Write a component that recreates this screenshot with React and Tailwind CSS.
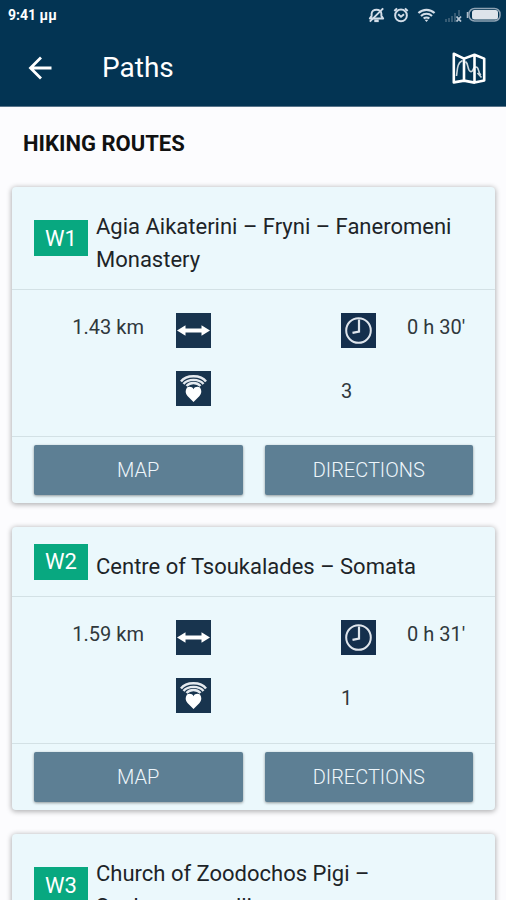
const routes = [
  {
    code: "W1",
    name: "Agia Aikaterini – Fryni – Faneromeni Monastery",
    distance: "1.43 km",
    time: "0 h 30'",
    difficulty: 3,
  },
  {
    code: "W2",
    name: "Centre of Tsoukalades – Somata",
    distance: "1.59 km",
    time: "0 h 31'",
    difficulty: 1,
  },
  {
    code: "W3",
    name: "Church of Zoodochos Pigi – Spakomenocelli",
    distance: "2.10 km",
    time: "0 h 45'",
    difficulty: 2,
  },
];

const StatusIcons = () => (
  <div className="flex items-center text-[#d3dde8]">
    {/* muted bell */}
    <svg viewBox="0 0 18 18" className="mr-2 h-4 w-[17px]" fill="none" stroke="currentColor" strokeWidth="2.200">
      <path d="M1.500 13h15l-2-3V7.600C14.500 4.800 12 3 9 3S3.500 4.800 3.500 7.600V10z" strokeLinejoin="round" />
      <path d="M6.500 15.500h5" strokeWidth="3" />
      <path d="M1.500 16.500l15-15" />
    </svg>
    {/* alarm */}
    <svg viewBox="0 0 18 18" className="mr-2 size-4" fill="none" stroke="currentColor" strokeWidth="2.200">
      <circle cx="9" cy="9.500" r="6.600" />
      <path d="M5.800 8.200L9 11l3.400-2.800M1.500 4.500l3-3M16.500 4.500l-3-3" />
    </svg>
    {/* wifi */}
    <svg viewBox="0 0 20 16" className="mr-2 h-4 w-[19px]" fill="none" stroke="currentColor" strokeWidth="2.200">
      <path d="M1.500 6a12.300 12.300 0 0 1 17 0M4.200 9a8.400 8.400 0 0 1 11.600 0M7 11.800a4.400 4.400 0 0 1 6 0" />
      <path d="M8 13h4l-2 2.400z" fill="currentColor" stroke="none" />
    </svg>
    {/* no signal */}
    <svg viewBox="0 0 18 14" className="mr-1 h-[14px] w-[18px]" fill="none" strokeWidth="2">
      <path d="M2 14v-3M5 14v-4M8 14V8M11 14V5M15 8V2" stroke="#365b74" />
      <path d="M12.500 8.500l4.500 5M17 8.500l-4.500 5" stroke="#b9c8d6" strokeWidth="1.800" />
    </svg>
    {/* battery */}
    <svg viewBox="0 0 36 16" className="h-4 w-9" fill="none">
      <rect x="3" y="1.500" width="31" height="12.500" rx="5.500" stroke="#8fa3b4" strokeWidth="1.500" />
      <rect x="6" y="3" width="26" height="9.500" rx="2.500" fill="#dde3ea" />
      <path d="M1.500 5v6" stroke="#aebdca" strokeWidth="1.500" />
    </svg>
  </div>
);

const BackIcon = () => (
  <svg viewBox="0 0 24 24" className="size-6" fill="none" stroke="currentColor" strokeWidth="2.800">
    <path d="M23.500 12H2.500M13 1.500L2.500 12L13 22.500" />
  </svg>
);

const MapIcon = () => (
  <svg viewBox="0 0 34 32" className="h-8 w-[34px]" fill="none" stroke="currentColor">
    <path
      d="M1.800 1.800L12 6.600L22.500 2.800L32.200 6.600V28.600L22.500 30.600L12 28.600L1.800 30.400zM12 6.600V28.600M22.500 2.800V30.600"
      strokeWidth="2.600"
      strokeLinejoin="round"
    />
    <path
      d="M4.500 24C5.500 17 5 11 10.500 8.500M13.500 9.500C17 12 15 18 18.500 19.500C22 20.500 20 15 24 15C27.500 15 25.500 21 29 23M25.500 21l4 4.500"
      strokeWidth="1.600"
      opacity="0.800"
    />
  </svg>
);

const DistanceIcon = () => (
  <svg viewBox="0 0 35 35" className="size-[35px] bg-[#18344e]" role="img" aria-label="Distance">
    <path d="M1 17.500L9.500 12.300V15.600H25.500V12.300L34 17.500L25.500 22.700V19.400H9.500V22.700z" fill="#fff" />
  </svg>
);

const ClockIcon = () => (
  <svg viewBox="0 0 35 35" className="size-[35px] bg-[#142f4d]" fill="none" stroke="#dfe5ec" role="img" aria-label="Duration">
    <circle cx="17.500" cy="17.500" r="12.300" strokeWidth="2" />
    <path d="M18 6.500V18.500L11.500 19.800" strokeWidth="2.200" />
  </svg>
);

const EffortIcon = () => (
  <svg viewBox="0 0 35 35" className="size-[35px] bg-[#18344e]" fill="none" stroke="#e6ebf0" role="img" aria-label="Difficulty">
    <path d="M5 10.500C10 3.500 25 3.500 30 10.500M7.500 13C12 7.500 23 7.500 27.500 13M10.500 15C14 11 21 11 24.500 15" strokeWidth="2.400" />
    <path
      d="M17.500 31L11.500 25C9.300 22.500 9 19.500 11 16.500C13.500 15.200 16.500 16 17.500 18.200C18.500 16 21.500 15.200 24 16.500C26 19.500 25.700 22.500 23.500 25z"
      fill="#fff"
      stroke="none"
    />
  </svg>
);

const RouteCard = ({ route }) => {
  return (
    <article className="rounded-sm bg-[#ebf8fc] shadow-[0_1px_5px_1px_rgba(0,0,0,0.28)]">
      {/* name */}
      <div className="flex items-center gap-2 border-b border-[#d3e1e5] px-[22px] py-[13px]">
        <span className="flex h-9 w-[54px] shrink-0 items-center justify-center bg-[#08a880] text-[22px] text-white">
          {route.code}
        </span>
        <h2 className="pt-[10px] text-[22px] leading-[33px] text-[#1d2428]">{route.name}</h2>
      </div>

      {/* details */}
      <div className="grid grid-cols-[164fr_35px_130fr_35px_119fr] gap-y-[23px] border-b border-[#d3e1e5] pt-[23px] pb-[30px] text-[20px] leading-7 text-[#30383c]">
        <span className="pr-8 text-right">{route.distance}</span>
        <DistanceIcon />
        <span />
        <ClockIcon />
        <span className="pl-[31px] whitespace-nowrap">{route.time}</span>
        <span />
        <EffortIcon />
        <span />
        <span className="pt-[6px]">{route.difficulty}</span>
      </div>

      {/* buttons */}
      <div className="grid grid-cols-2 gap-[22px] px-[22px] py-2 text-[20px] font-light text-[#eef6fb]">
        <button className="h-[50px] rounded-xs bg-[#5d7f94] shadow-[0_1px_3px_rgba(0,0,0,0.4)]">MAP</button>
        <button className="h-[50px] rounded-xs bg-[#5d7f94] shadow-[0_1px_3px_rgba(0,0,0,0.4)]">DIRECTIONS</button>
      </div>
    </article>
  );
};

const App = () => {
  return (
    <div className="min-h-screen bg-[#fcfcfe] pb-6 font-[Roboto,sans-serif]">
      <header className="border-b border-[#58748a] bg-[#033453] text-white">
        <div className="flex h-[30px] items-center justify-between pr-1 pl-2">
          <span className="text-[14px] font-bold">9:41 μμ</span>
          <StatusIcons />
        </div>
        <div className="flex h-[76px] items-center pr-5 pl-7">
          <button aria-label="Back">
            <BackIcon />
          </button>
          <h1 className="ml-[50px] flex-1 text-[28px]">Paths</h1>
          <button aria-label="Show map">
            <MapIcon />
          </button>
        </div>
      </header>

      <main className="pr-[11px] pl-3">
        <h2 className="flex h-20 items-center pb-2 pl-[11px] text-[22px] font-bold text-[#111]">HIKING ROUTES</h2>
        <div className="flex flex-col gap-6">
          {routes.map((route) => (
            <RouteCard key={route.code} route={route} />
          ))}
        </div>
      </main>
    </div>
  );
};

export default App;
